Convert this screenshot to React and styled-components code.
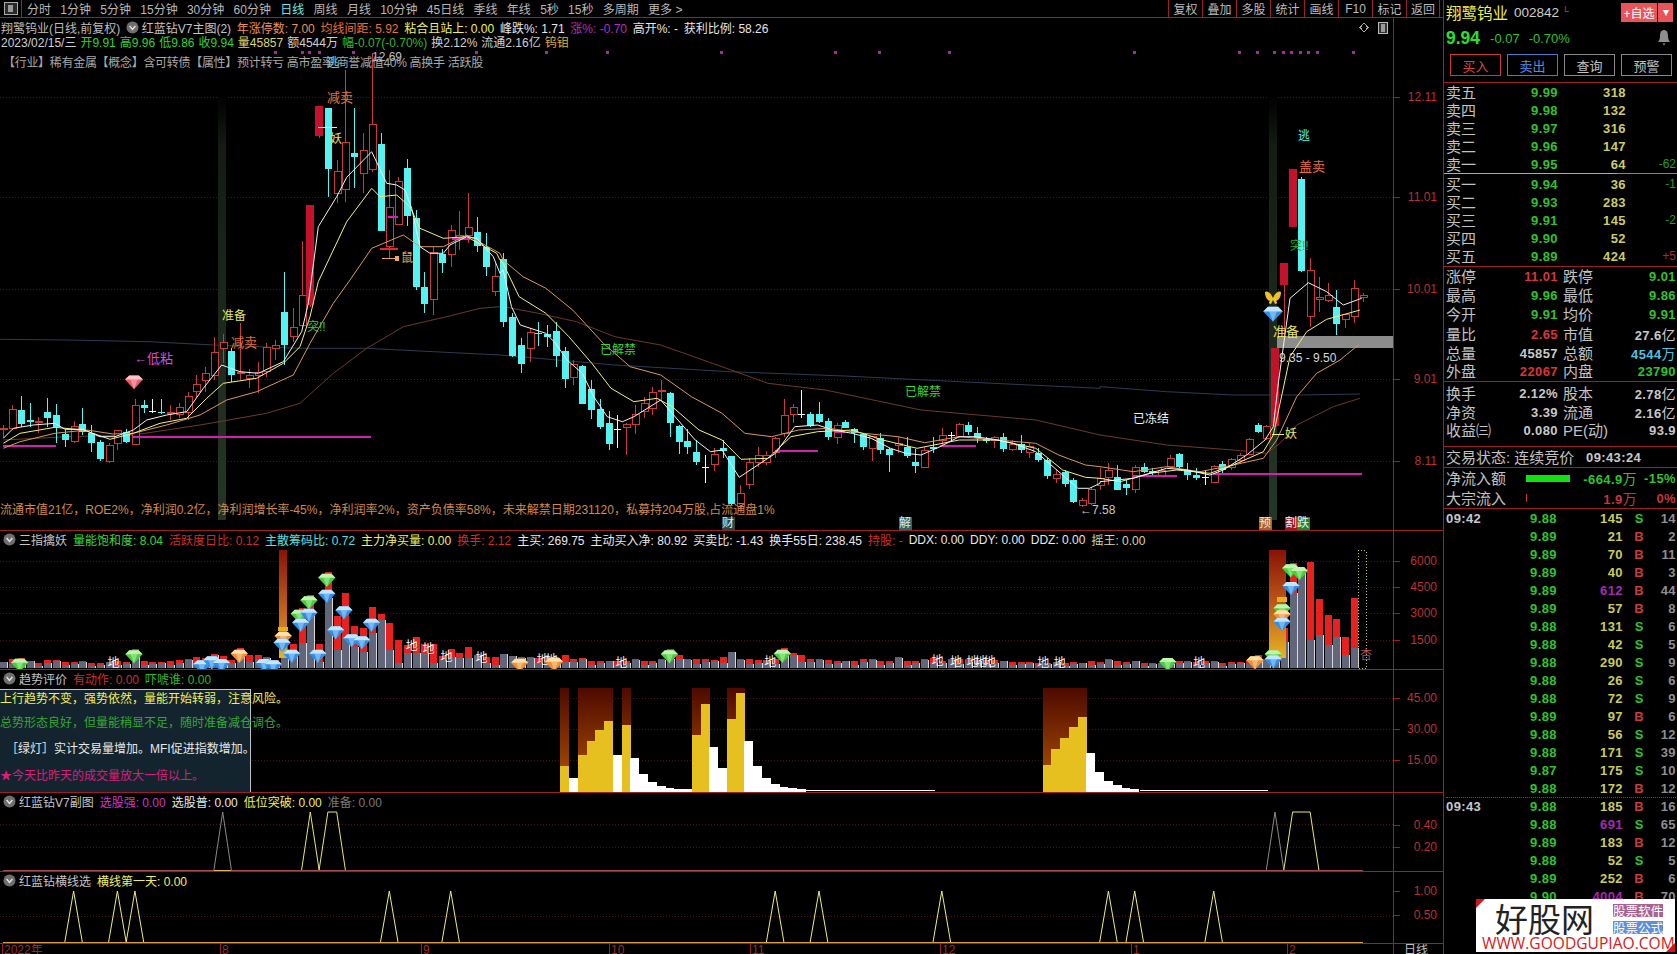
import React from "react";
import styled, { createGlobalStyle } from "styled-components";

const FONT = `"Liberation Sans","Noto Sans CJK SC",sans-serif`;
const LINE = "#9c1f28";
const GRID = "#4d1616";
const CYAN = "#55f2f2";
const RED = "#c93a3c";

const Global = createGlobalStyle`
  html, body { margin: 0; padding: 0; background: #000; overflow: hidden; }
  * { box-sizing: border-box; }
`;

const Page = styled.div`
  width: 1677px; height: 954px; display: flex; background: #000; color: #c4c4c4;
  font: 12px ${FONT}; overflow: hidden;
`;
const LeftCol = styled.div`width: 1443px; display: flex; flex-direction: column; flex: none;`;

/* toolbar */
const Toolbar = styled.div`
  height: 18px; flex: none; display: flex; align-items: stretch; border-bottom: 1px solid ${LINE}; padding-right: 3px;
`;
const ToolIcon = styled.div`
  width: 22px; display: flex; align-items: center; justify-content: center; border-right: 1px solid ${LINE}; margin-right: 5px;
`;
const Periods = styled.div`display: flex; align-items: center; gap: 9.3px; white-space: nowrap;`;
const Period = styled.span`color: ${p => (p.$on ? "#6fe6f0" : "#b8b8b8")}; font-size: 12px;`;
const Tools = styled.div`display: flex; margin-left: auto;`;
const Tool = styled.div`
  width: 34px; display: flex; align-items: center; justify-content: center; color: #bcbcbc; border-left: 1px solid ${LINE};
  &:last-child { border-right: 1px solid ${LINE}; }
`;

/* panels */
const Panel = styled.div`
  height: ${p => p.$h}px; flex: none; display: grid; grid-template-columns: 1393px 50px;
  border-bottom: ${p => (p.$last ? "0" : `1px solid ${LINE}`)};
`;
const Plot = styled.div`position: relative; overflow: hidden;`;
const Chart = styled.svg`display: block; shape-rendering: crispEdges;`;
const AxisCol = styled.div`border-left: 1px solid ${LINE}; overflow: hidden;`;
const AxisSvg = styled.svg`display: block;`;
const Smooth = styled.g`shape-rendering: geometricPrecision;`;
const Note = styled.text`
  font: ${p => p.$w || 400} ${p => p.$s || 12}px ${FONT}; fill: ${p => p.$c || "#ccc"};
  text-anchor: ${p => p.$a || "start"}; dominant-baseline: central;
`;
const Overlay = styled.div`position: absolute; left: 0; top: 0; width: 100%; pointer-events: none;`;
const HeadRow = styled.div`
  display: flex; align-items: center; white-space: nowrap; height: ${p => p.$h || 17}px; gap: ${p => p.$gap || 6}px;
  padding-left: ${p => p.$pl ?? 3}px; margin-top: ${p => p.$mt || 0}px;
`;
const Item = styled.span`color: ${p => p.$c || "#c4c4c4"}; letter-spacing: ${p => p.$ls || 0}px;`;
const Badge = styled.svg`flex: none; margin-right: -3px;`;

const Tip = styled.div`
  position: absolute; left: 0; top: 19px; width: 251px; height: 103px; background: #14242e;
  border-top: 1px solid #b6c4c8; border-right: 1px solid #b6c4c8; font-size: 12px;
`;
const TipLine = styled.div`
  position: absolute; left: ${p => p.$l || 0}px; top: ${p => p.$t}px; white-space: nowrap; color: ${p => p.$c}; line-height: 16px;
`;

/* right side */
const Right = styled.div`
  width: 234px; flex: none; border-left: 1px solid ${LINE}; position: relative; overflow: hidden;
  display: flex; flex-direction: column;
`;
const Quote = styled.div`height: 83px; flex: none; border-bottom: 1px solid ${LINE}; padding: 0 2px;`;
const NameRow = styled.div`display: flex; align-items: center; height: 24px;`;
const StockName = styled.span`color: #f2f23c; font-size: 15.5px;`;
const Code = styled.span`color: #cfcfcf; font-size: 13.5px; margin-left: 6px;`;
const Mark = styled.span`color: #c33; font-size: 9px; margin: -6px 0 0 5px;`;
const FavBox = styled.div`margin-left: auto; display: flex; gap: 1px; margin-right: 2px;`;
const Fav = styled.div`
  height: 19px; background: #e9545a; color: #fff; display: flex; align-items: center; justify-content: center;
  width: ${p => p.$w}px; font-size: 12px;
`;
const PriceRow = styled.div`display: flex; align-items: center; height: 26px; margin-top: 1px;`;
const BigPrice = styled.span`color: #2be02b; font: 700 17.5px ${FONT};`;
const Delta = styled.span`color: #2fc32f; font-size: 13px; margin-left: ${p => p.$m}px;`;
const Bell = styled.svg`margin-left: auto; margin-right: 4px;`;
const BtnRow = styled.div`display: flex; gap: 6px; margin: 3px 0 0 4px;`;
const Btn = styled.div`
  width: 51px; height: 22px; border: 1px solid ${p => p.$c}; color: ${p => p.$t}; display: flex; align-items: center; justify-content: center; font-size: 13px;
`;
const Section = styled.div`
  height: ${p => p.$h}px; flex: none; padding: ${p => p.$pt || 0}px 1px 0 2px; border-bottom: 1px solid ${LINE};
  ${p => p.$split ? "border-image: linear-gradient(90deg,#c8a85a 74%,#5f86c8 74%) 1;" : ""}
`;
const Row = styled.div`
  display: grid; height: ${p => p.$h}px; align-items: center; grid-template-columns: ${p => p.$cols};
  white-space: nowrap;
`;
const Label = styled.span`font-size: 15px; color: #c2c2c2; line-height: 1;`;
const Num = styled.span`
  font: 700 13px ${FONT}; letter-spacing: .4px; text-align: ${p => p.$left ? "left" : "right"}; color: ${p => p.$c || "#c8c8c8"};
`;
const Unit = styled.span`font-weight: 400; font-size: 14px;`;
const Small = styled.span`font-size: 12px; text-align: right; color: ${p => p.$c}; opacity: .8;`;
const FlowBar = styled.div`height: ${p => p.$hh}px; width: ${p => p.$w}px; background: ${p => p.$c};`;
const Ticks = styled.div`flex: 1; overflow: hidden; padding: 0 1px 0 2px;`;
const TickRow = styled.div`
  display: grid; height: 18px; align-items: center; grid-template-columns: 48px 63px 66px 32px 21px;
  ${p => p.$first ? "border-top: 1px dotted #555;" : ""} white-space: nowrap;
`;
const Side = styled.span`font: 700 13px ${FONT}; text-align: center; color: ${p => p.$s === "S" ? "#2fc32f" : "#c83c3c"};`;
const Count = styled.span`font: 700 13px ${FONT}; letter-spacing: .4px; text-align: right; color: #8f8f8f;`;

const Water = styled.div`
  position: absolute; right: 2px; bottom: 2px; width: 199px; height: 53px; background: #fff; overflow: hidden;
  &::before { content: ""; position: absolute; left: 0; top: 0; border-top: 9px solid #d01818; border-right: 9px solid transparent; }
  &::after { content: ""; position: absolute; right: 0; bottom: 0; border-bottom: 9px solid #d01818; border-left: 9px solid transparent; }
`;
const WaterTop = styled.div`display: flex; align-items: center; height: 36px; padding: 3px 0 0 19px;`;
const WaterName = styled.span`color: #222; font: 400 33px/33px "Noto Sans CJK SC",sans-serif;`;
const WaterTags = styled.div`display: flex; flex-direction: column; gap: 4px; margin-left: 19px;`;
const WaterTag = styled.span`
  background: ${p => p.$c}; color: #fff; font: 400 12.5px/13px "Noto Sans CJK SC",sans-serif; width: 50px; text-align: center;
`;
const WaterUrl = styled.div`color: #d42020; font: 400 15.6px/16px "Open Sans",sans-serif; padding-left: 6px; white-space: nowrap;`;

/* data */
const X = i => 3.4 + 8.77 * i;
const Y = v => 90 + v / 3;
const V = v => 520 + v / 3;
const raw = [
  [1015,1016,1005,1045],[958,1015,945,1020],[960,1002,918,1010],[990,996,940,1010],[993,997,980,1030],[966,985,925,1010],[975,1012,942,1060],[1032,1050,1020,1070],
  [1010,1055,992,1060],[1003,1028,955,1035],[1028,1058,1005,1085],[1057,1107,1050,1112],[1065,1112,1060,1120],[1022,1060,1020,1080],[1025,1055,1018,1060],[946,1063,928,1065],
  [945,955,930,970],[962,964,926,970],[965,967,928,972],[968,972,945,990],[953,975,938,985],[920,968,905,990],[883,905,855,925],[850,872,830,905],[787,855,742,870],[757,775,733,820],
  [783,855,775,875],[848,850,700,870],[857,865,838,895],[848,858,815,910],[772,845,760,860],[766,776,750,810],[666,765,545,825],[712,740,655,755],[616,705,452,710],[346,645,346,650],
  [48,137,48,145],[55,237,55,322],[243,310,210,340],[157,298,-60,335],[188,200,55,295],[182,250,130,310],[103,238,-110,245],[162,422,130,422],[352,470,240,505],[275,403,260,405],
  [235,380,208,408],[385,593,360,600],[590,640,545,668],[487,628,470,675],[492,520,478,550],[422,493,405,530],[435,440,362,480],[412,435,308,460],[427,470,382,485],[472,532,430,558],
  [560,605,520,618],[507,695,490,710],[682,800,670,800],[765,822,745,850],[727,775,715,815],[728,730,695,768],[732,742,705,770],[723,798,695,830],[783,867,770,895],[823,862,810,885],
  [828,942,825,942],[897,960,870,988],[958,1013,928,1018],[1000,1062,962,1080],[1018,1020,975,1075],[1003,1012,1000,1095],[973,1003,945,1033],[940,965,920,985],[908,957,890,975],
  [902,904,870,930],[910,1000,905,1040],[1008,1055,1005,1092],[1053,1070,1018,1092],[1087,1118,1050,1125],[1130,1132,1095,1178],[1092,1123,1075,1143],[1075,1085,1050,1105],
  [1098,1243,1098,1245],[1210,1250,1185,1255],[1117,1182,1105,1198],[1095,1117,1072,1130],[1095,1115,1083,1125],[1045,1088,1040,1105],[977,1032,928,1040],[953,973,942,998],
  [972,974,900,985],[972,1008,965,1012],[972,997,935,1000],[993,1042,985,1050],[1005,1042,1000,1063],[995,1012,990,1015],[1018,1030,1015,1060],[1033,1072,1030,1080],[1040,1075,1038,1112],
  [1045,1082,1030,1092],[1078,1097,1075,1145],[1060,1065,1040,1090],[1072,1100,1042,1105],[1115,1128,1078,1150],[1080,1130,1070,1133],[1070,1076,1040,1090],[1035,1050,1015,1065],
  [1035,1037,1025,1055],[1003,1040,1000,1045],[1005,1027,995,1035],[1030,1045,1012,1058],[1048,1054,1040,1058],[1042,1050,1038,1075],[1040,1075,1030,1085],[1062,1078,1050,1082],
  [1062,1080,1035,1088],[1068,1085,1060,1105],[1090,1110,1075,1115],[1110,1157,1105,1168],[1153,1165,1140,1180],[1147,1182,1140,1190],[1170,1235,1165,1240],[1232,1247,1225,1250],
  [1197,1240,1190,1245],[1165,1185,1135,1200],[1142,1162,1120,1185],[1160,1198,1125,1200],[1183,1196,1170,1215],[1132,1198,1125,1210],[1130,1145,1120,1150],[1143,1148,1135,1155],
  [1140,1155,1130,1160],[1105,1130,1095,1135],[1093,1133,1090,1135],[1140,1155,1118,1170],[1155,1163,1135,1170],[1160,1162,1140,1185],[1130,1177,1125,1180],[1123,1140,1112,1150],
  [1108,1133,1105,1140],[1095,1110,1090,1120],[1048,1092,1045,1095],[1005,1025,1000,1030],[1008,1045,1005,1050],[775,1008,775,1010],[520,585,520,775],[238,412,238,412],[268,545,262,545],
  [542,680,503,710],[622,628,562,665],[615,630,580,635],[650,702,600,735],[672,686,672,715],[595,680,570,700],[617,623,610,635],
];
const cyanSet = new Set([2,3,5,6,7,9,10,11,14,16,17,18,26,32,37,40,43,46,47,48,50,54,55,57,58,59,61,62,63,64,66,67,68,69,70,76,77,78,79,80,82,83,91,92,93,94,96,97,98,100,101,103,104,106,108,110,111,112,114,116,118,119,121,122,127,128,130,131,134,135,136,137,139,143,148,152]);
const solidSet = new Set([35,36,145,146,147]);
const whiteSet = new Set([17,70,80,91,108,137]);

const pts = {
  z6: (x, y) => [x / 3, Y(y)],
  z9: (x, y) => [500 + x / 2.613, Y(y)],
  z7: (x, y) => [1100 + x / 3, Y(y)],
};
const build = segs => segs.flatMap(([k, arr]) => {
  const out = [];
  for (let n = 0; n < arr.length; n += 2) out.push(pts[k](arr[n], arr[n + 1]).map(v => v.toFixed(1)).join(","));
  return out;
}).join(" ");

const MAS = [
  { c: "#2e3a55", s: [["z6",[0,748,200,750,450,755,640,765,900,775,1100,775,1300,785,1500,795]],["z9",[0,795,300,825,600,845,900,858,1200,875,1568,895]],["z7",[0,890,200,905,400,915,600,915,780,912]]] },
  { c: "#6b3a2c", s: [["z6",[10,1050,200,1040,400,1035,600,1005,800,970,900,940,1000,850,1100,775,1210,710,1340,680,1440,655,1500,650]],["z9",[8,650,100,670,200,695,300,740,420,765,580,830,700,880,850,900,1100,960,1400,990,1568,1035]],["z7",[0,1035,200,1065,400,1080,500,1090,540,1060,590,1005,700,950,780,925]]] },
  { c: "#d8985c", s: [["z6",[10,1075,60,1055,165,1030,260,1020,340,1032,400,1030,500,1005,600,975,680,930,770,905,880,855,930,760,1000,640,1050,570,1115,475,1210,435,1260,470,1330,470,1400,435,1500,490]],["z9",[8,510,60,560,120,595,190,660,270,760,340,830,420,855,500,920,580,970,640,1030,710,1040,780,1020,860,1015,950,1030,1040,1040,1110,1058,1200,1040,1300,1050,1400,1060,1460,1095,1530,1125,1568,1130]],["z7",[0,1130,100,1145,200,1130,300,1145,400,1125,490,1105,530,1050,590,920,650,850,720,810,775,765]]] },
  { c: "#f2f27a", s: [["z6",[10,1060,60,1030,165,1012,250,1020,330,1048,400,1030,480,1000,560,985,620,925,670,880,770,865,850,820,900,770,930,680,955,575,1040,395,1115,295,1140,320,1190,315,1230,350,1260,415,1330,445,1400,440,1490,490,1500,510]],["z9",[8,520,50,620,120,670,180,740,240,820,290,895,350,935,410,925,450,950,520,1020,580,1050,630,1108,700,1105,760,1040,830,1025,920,1020,1000,1050,1090,1075,1200,1050,1300,1050,1400,1075,1470,1140,1530,1162,1568,1165]],["z7",[0,1165,60,1175,150,1150,230,1140,330,1150,400,1125,490,1085,520,1035,570,800,620,725,680,688,780,660]]] },
  { c: "#f4f4f4", s: [["z6",[10,1045,40,1015,100,1005,165,1000,195,1018,250,1018,300,1040,345,1040,400,1020,440,990,500,975,560,965,610,895,665,825,720,845,775,850,850,815,905,725,925,640,955,410,1010,320,1040,262,1115,185,1160,280,1190,285,1215,300,1235,355,1260,470,1290,490,1330,490,1350,465,1400,440,1430,445,1480,500,1500,550]],["z9",[8,540,30,650,53,705,120,730,145,760,175,810,215,850,245,920,280,980,320,995,350,980,420,930,450,970,510,1050,550,1085,580,1080,625,1162,720,1090,770,1010,830,1005,870,1020,920,1030,970,1045,1020,1075,1060,1090,1100,1095,1150,1070,1200,1040,1240,1040,1290,1048,1340,1060,1400,1085,1470,1155,1510,1195,1540,1195,1568,1180]],["z7",[0,1175,50,1170,100,1165,150,1150,200,1135,260,1140,330,1155,370,1140,440,1095,495,1050,520,1010,535,880,570,625,625,578,680,605,730,645,785,625]]] },
];

const Candle = ({ i, r }) => {
  const [t, b, h, l] = r;
  const x = Math.round(X(i));
  const top = Y(t), bot = Y(b), hi = Y(h), lo = Y(l);
  const bh = Math.max(1, Math.round(bot - top));
  if (solidSet.has(i)) {
    return (<g>
      <rect x={x} y={hi} width="1" height={lo - hi} fill={RED} />
      <rect x={x - 4} y={top} width="8" height={bot - top} fill="#c4122c" />
    </g>);
  }
  if (cyanSet.has(i)) {
    const c = whiteSet.has(i) ? "#e8ffff" : CYAN;
    return (<g>
      <rect x={x} y={hi} width="1" height={lo - hi} fill={c} />
      <rect x={x - 3} y={top} width="7" height={bh} fill={c} />
    </g>);
  }
  return (<g>
    <rect x={x} y={hi} width="1" height={lo - hi} fill={RED} />
    <rect x={x - 3} y={top} width="7" height={bh} fill="#000" stroke={RED} strokeWidth="1" />
  </g>);
};

const Gem = ({ x, y, c, l, s = 1.15 }) => (
  <g transform={`translate(${x} ${y}) scale(${s})`}>
    <path d="M-7.5 -2 L-4 -5.5 H4 L7.5 -2 L0 6 Z" fill={c} />
    <path d="M-7.5 -2 L-4 -5.5 H4 L7.5 -2 Z" fill={l} />
    <path d="M-3 -2 L0 6 L3 -2 Z" fill="#fff" opacity=".35" />
  </g>
);
const GREEN = ["#46cf36", "#bff3ae"];
const BLUE = ["#2f90e8", "#c3e6ff"];
const ORANGE = ["#ee9030", "#ffe1a8"];
const PINK = ["#ee5a66", "#ffc4c4"];

const z4 = (x, y) => [x / 2.8, V(y)];
const z11 = (x, y) => [540 + x / 2.063, 620 + y / 3];
const z8 = (x, y) => [1100 + x / 3, V(y)];
const gems = [
  [z4(55,435),GREEN],[z4(375,410),GREEN],[z4(915,180),GREEN],[z4(865,248),GREEN],[z4(838,288),GREEN],
  [z4(565,440),BLUE],[z4(593,428),BLUE],[z4(620,436),BLUE],[z4(740,436),BLUE],[z4(765,440),BLUE],[z4(793,355),ORANGE],[z4(790,375),BLUE],[z4(817,408),BLUE],[z4(890,408),BLUE],[z4(915,228),BLUE],[z4(963,278),BLUE],[z4(940,338),BLUE],[z4(985,362),BLUE],[z4(1013,368),BLUE],[z4(1040,315),BLUE],[z4(842,315),BLUE],[z4(865,285),BLUE],
  [z4(670,408),ORANGE],[z4(1455,435),ORANGE],[z4(1550,432),ORANGE],
  [z11(267,110),GREEN],[z11(500,108),GREEN],[z11(1295,133),GREEN],[z11(30,132),ORANGE],[z11(1475,128),ORANGE],
  [z8(572,152),GREEN],[z8(598,160),GREEN],[z8(573,205),BLUE],[z8(546,272),GREEN],[z8(546,290),ORANGE],[z8(546,312),BLUE],[z8(520,410),GREEN],[z8(520,425),BLUE],
];
const earth = [
  z4(318,430),z4(1153,378),z4(1200,388),z4(1250,410),z4(1348,415),z4(1520,420),z4(1545,420),
  z11(168,128),z11(475,125),z11(820,122),z11(858,125),z11(892,125),z11(910,125),z11(928,125),z11(1038,128),z11(1072,128),z11(1360,128),
];

const volTop = [425,418,415,422,430,420,420,427,425,423,430,430,425,422,425,388,422,427,427,423,420,417,410,415,402,408,420,385,406,405,410,420,340,372,265,225,372,155,288,218,318,323,262,282,308,360,375,352,372,372,408,387,398,380,405,410,410,402,408,410,410,415,412,420,
  405,418,413,422,422,422,422,422,418,422,422,418,388,405,418,418,418,420,410,396,417,418,420,420,417,385,400,405,417,418,420,422,422,422,418,418,422,422,412,422,422,418,415,422,418,418,418,420,420,420,422,425,427,427,428,428,425,428,425,428,423,427,418,422,427,422,428,428,428,418,423,423,425,422,424,428,427,427,420,405,418,
  390,325,130,140,127,238,285,297,352,234,440];
const grayTop = { 32:400,33:405,34:370,35:280,36:425,37:235,38:390,39:350,40:380,41:395,42:340,43:300,44:390,45:430,46:400,47:400,48:400,49:430,51:410,52:415,53:415,56:435,57:402,58:408,59:415,83:396,82:428,
  146:365,147:220,148:155,149:360,150:345,151:375,152:350,153:405,154:385,155:445,145:405 };

const Vol = ({ i, t }) => {
  const x = Math.round(X(i)) - 3;
  const base = V(445);
  const g = grayTop[i] ?? (t + (445 - t) * (i % 3 === 0 ? 0.1 : i % 3 === 1 ? 0.5 : 0.3));
  if (i === 155) return null;
  return (<g>
    <rect x={x} y={V(t)} width="7" height={base - V(t)} fill="#e8201e" />
    <rect x={x} y={V(g)} width="7" height={base - V(g)} fill="#62667a" />
    <rect x={x + 7} y={V(g)} width="1" height={base - V(g)} fill="#d8d8d8" />
  </g>);
};

const goldBars = { 64:258,66:225,67:183,68:150,69:123,71:135,79:165,80:72,83:117,84:38,119:255,120:207,121:174,122:140,123:110 };
const whiteBars = { 65:295,70:225,72:234,73:282,74:306,75:318,76:324,77:327,78:328,81:201,82:264,85:183,86:258,87:294,88:312,89:321,90:324,91:328,124:218,125:275,126:303,127:315,128:323,129:327 };
const T3 = v => 680 + v / 3;

const Grid = ({ ys }) => ys.map(y => (
  <line key={y} x1="0" x2="1393" y1={y + .5} y2={y + .5} stroke={GRID} strokeDasharray="1 2" />
));

const AxisLabels = ({ top, h, items }) => (
  <AxisSvg width="49" height={h} viewBox={`1394 ${top} 49 ${h}`}>
    {items.map(([y, t]) => (
      <g key={t}>
        <rect x="1394" y={y} width="6" height="1" fill={LINE} />
        <Note x="1437" y={y} $a="end" $c="#bb3036">{t}</Note>
      </g>
    ))}
  </AxisSvg>
);

const Chev = () => (
  <Badge width="13" height="13" viewBox="0 0 13 13">
    <circle cx="6.5" cy="6.5" r="6" fill="#6f6f6f" />
    <path d="M3.6 5 L6.5 8.4 L9.4 5" fill="none" stroke="#e4e4e4" strokeWidth="1.4" />
  </Badge>
);

const PERIODS = ["分时","1分钟","5分钟","15分钟","30分钟","60分钟","日线","周线","月线","10分钟","45日线","季线","年线","5秒","15秒","多周期","更多 >"];
const TOOLS = ["复权","叠加","多股","统计","画线","F10","标记","返回"];
const dots = [274,300.5,308,317.5,352.4,475,545,606,720,834,878,948,1132.5,1238,1256,1273,1282,1290,1299,1307,1316,1352];
const MAGENTA = [[3,56,445],[133,371,436],[775,818,450],[940,976,445],[1133,1177,475],[1213,1362,473]];

const MainPanel = () => (
  <Panel $h={513}>
    <Plot>
      <Chart width="1393" height="512" viewBox="0 18 1393 512">
        <defs>
          <linearGradient id="col" x1="0" x2="0" y1="0" y2="1">
            <stop offset="0" stopColor="#000" /><stop offset=".12" stopColor="#141c14" /><stop offset="1" stopColor="#263626" />
          </linearGradient>
        </defs>
        <Grid ys={[97,197,289,379,461]} />
        <rect x="218" y="95" width="8" height="425" fill="url(#col)" />
        <rect x="1269" y="95" width="8" height="425" fill="url(#col)" />
        {dots.map(x => <rect key={x} x={x} y="51" width="3" height="3" fill="#a52aa0" />)}
        <Smooth>{MAS.slice(0, 2).map(m => <polyline key={m.c} points={build(m.s)} fill="none" stroke={m.c} strokeWidth="1" />)}</Smooth>
        {raw.map((r, i) => <Candle key={i} i={i} r={r} />)}
        <rect x="1277" y="336" width="116" height="12" fill="#8c8c8c" />
        {MAGENTA.map(([a, b, y]) => (
          <rect key={a} x={a} y={y} width={b - a} height="2" fill="#d51fb4" />
        ))}
        <rect x="388" y="216" width="10" height="2" fill="#d51fb4" />
        <rect x="452" y="238" width="18" height="2" fill="#d51fb4" />
        <rect x="835" y="431" width="10" height="2" fill="#d51fb4" />
        <rect x="380" y="248" width="18" height="2" fill="#e02828" />
        <Smooth>{MAS.slice(2).map(m => <polyline key={m.c} points={build(m.s)} fill="none" stroke={m.c} strokeWidth="1" />)}</Smooth>
        <line x1="318" x2="337" y1="127.5" y2="127.5" stroke="#e8e8d0" />
        <Note x="330" y="139" $c="#e6e66a">妖</Note>
        <Note x="327" y="63" $s={12} $c={CYAN}>逃</Note>
        <Note x="372" y="57" $c="#bdbdbd">12.69</Note>
        <Note x="327" y="97" $s={13} $c="#e8703c">减卖</Note>
        <line x1="382" x2="394" y1="258.5" y2="258.5" stroke="#eba85c" />
        <circle cx="397" cy="258.5" r="2.5" fill="#eba85c" />
        <Note x="401" y="258" $c="#eba85c">鼠</Note>
        <Note x="222" y="316" $s={12} $c="#e8e85c">准备</Note>
        <Note x="231" y="342" $s={13} $c="#e8703c">减卖</Note>
        <Note x="307" y="327" $s={12} $c="#39c63a">突!!</Note>
        <Note x="134" y="358" $s={13} $c="#d24ed2">←低粘</Note>
        <Note x="600" y="350" $c="#39d63a">已解禁</Note>
        <Note x="905" y="392" $c="#39d63a">已解禁</Note>
        <Note x="1133" y="419" $c="#f0f0f0">已冻结</Note>
        <Note x="1298" y="136" $c={CYAN}>逃</Note>
        <Note x="1299" y="166" $s={13} $c="#e8703c">盖卖</Note>
        <Note x="1290" y="246" $c="#2fa82f">突!!</Note>
        <Note x="1273" y="331" $s={13} $c="#e8e85c">准备</Note>
        <Note x="1279" y="358" $c="#d8d8d8">9.35 - 9.50</Note>
        <line x1="1272" x2="1284" y1="434.5" y2="434.5" stroke="#e8e870" />
        <Note x="1285" y="434" $c="#e8e870">妖</Note>
        <Note x="1080" y="510" $c="#c8c8c8">←7.58</Note>
        <Smooth>
          <Gem x={134} y={382} c={PINK[0]} l={PINK[1]} s={1.2} />
          <Gem x={1273} y={314} c={BLUE[0]} l={BLUE[1]} s={1.3} />
          <path d="M1273 298 C1270 291 1266 291 1265 292 C1265 297 1267 300 1270 301 C1268 303 1269 304 1271 304 L1273 300 L1275 304 C1277 304 1278 303 1276 301 C1279 300 1281 297 1281 292 C1280 291 1276 291 1273 298 Z" fill="#ecc22c" />
        </Smooth>
        <Note x="0" y="510" $c="#d08a4a">流通市值21亿，ROE2%，净利润0.2亿，净利润增长率-45%，净利润率2%，资产负债率58%，未来解禁日期231120，私募持204万股,占流通盘1%</Note>
        <rect x="722" y="517" width="13" height="13" fill="#1f4a4a" /><Note x="722" y="523" $c="#e6e6e6">财</Note>
        <rect x="899" y="517" width="13" height="13" fill="#1f6a6a" /><Note x="899" y="523" $c="#e6e6e6">解</Note>
        <rect x="1259" y="517" width="13" height="13" fill="#a8622c" /><Note x="1259" y="523" $c="#f0e8d0">预</Note>
        <rect x="1285" y="517" width="12" height="13" fill="#a01414" /><rect x="1297" y="517" width="13" height="13" fill="#178a2c" />
        <Note x="1285" y="523" $c="#f0f0f0">割跌</Note>
        <path d="M1364 23 L1368 27.5 L1364 32 L1360 27.5 Z" fill="none" stroke="#aaa" />
        <rect x="1378.5" y="22.5" width="9" height="11" fill="#333" stroke="#bbb" />
        <rect x="1381" y="24" width="4" height="8" fill="#999" />
      </Chart>
      <Overlay>
        <HeadRow $h={14} $mt={2} $gap={5.7} $pl={1}>
          <Item $c="#bdbdbd">翔鹭钨业(日线,前复权)</Item><Chev /><Item>红蓝钻V7主图(2)</Item>
          <Item $c="#e8935a">年涨停数: 7.00</Item><Item $c="#e8703c">均线间距: 5.92</Item>
          <Item $c="#f0f05a">粘合且站上: 0.00</Item><Item $c="#e6e6e6">峰跌%: 1.71</Item>
          <Item $c="#b32fc0">涨%: -0.70</Item><Item $c="#e6e6e6">高开%: -</Item><Item $c="#e6e6e6">获利比例: 58.26</Item>
        </HeadRow>
        <HeadRow $h={14} $gap={4} $pl={1}>
          <Item $c="#cfcfcf">2023/02/15/三</Item><Item $c="#2fd42f">开9.91</Item><Item $c="#2fd42f">高9.96</Item><Item $c="#2fd42f">低9.86</Item><Item $c="#2fd42f">收9.94</Item>
          <Item $c="#d8d86a">量45857</Item><Item $c="#cfcfcf">额4544万</Item><Item $c="#2fb82f">幅-0.07(-0.70%)</Item><Item $c="#cfcfcf">换2.12%</Item><Item $c="#cfcfcf">流通2.16亿</Item><Item $c="#e0b030">钨钼</Item>
        </HeadRow>
        <HeadRow $h={14} $mt={6} $gap={0}>
          <Item $c="#a8a8a8" $ls={-0.3}>【行业】稀有金属【概念】含可转债【属性】预计转亏 高市盈率 商誉减值40% 高换手 活跃股</Item>
        </HeadRow>
      </Overlay>
    </Plot>
    <AxisCol><AxisLabels top={18} h={512} items={[[97,"12.11"],[197,"11.01"],[289,"10.01"],[379,"9.01"],[461,"8.11"]]} /></AxisCol>
  </Panel>
);

const VolPanel = () => (
  <Panel $h={139}>
    <Plot>
      <Chart width="1393" height="138" viewBox="0 531 1393 138">
        <defs>
          <linearGradient id="fire" x1="0" x2="0" y1="0" y2="1">
            <stop offset="0" stopColor="#8a1206" /><stop offset=".55" stopColor="#c4601a" /><stop offset="1" stopColor="#e6b422" />
          </linearGradient>
        </defs>
        <Grid ys={[561,587,613,640]} />
        {volTop.map((t, i) => <Vol key={i} i={i} t={t} />)}
        <rect x="279" y="550" width="8" height="108" fill="url(#fire)" />
        <rect x="1269" y="550" width="17" height="108" fill="url(#fire)" />
        <rect x="1358" y="550.5" width="8" height="118" fill="none" stroke="#c8c860" strokeDasharray="1 2" />
        {earth.map(([x, y], n) => <Note key={n} x={x - 6} y={y} $c="#f4f4f4">地</Note>)}
        <Smooth>{gems.map(([[x, y], [c, l]], n) => <Gem key={n} x={x} y={y} c={c} l={l} />)}</Smooth>
        <rect x="278" y="627" width="10" height="4" fill="#e8b020" />
        <rect x="1277" y="597" width="10" height="5" fill="#e8b020" />
        <Note x="1360" y="655" $c="#b05060">杏</Note>
      </Chart>
      <Overlay>
        <HeadRow $h={17} $gap={6}>
          <Chev /><Item>三指擒妖</Item><Item $c="#39d63a">量能饱和度: 8.04</Item><Item $c="#d02c2c">活跃度日比: 0.12</Item>
          <Item $c="#55e0e0">主散筹码比: 0.72</Item><Item $c="#f0f05a">主力净买量: 0.00</Item><Item $c="#d02c2c">换手: 2.12</Item>
          <Item $c="#e8e8e8">主买: 269.75</Item><Item $c="#e8e8e8">主动买入净: 80.92</Item><Item $c="#e8e8e8">买卖比: -1.43</Item>
          <Item $c="#e8e8e8">换手55日: 238.45</Item><Item $c="#d02c2c">持股: -</Item><Item $c="#e8e8e8">DDX: 0.00</Item><Item $c="#e8e8e8">DDY: 0.00</Item>
          <Item $c="#e8e8e8">DDZ: 0.00</Item><Item $c="#d8d8a0">摇王: 0.00</Item>
        </HeadRow>
      </Overlay>
    </Plot>
    <AxisCol><AxisLabels top={531} h={138} items={[[561,"6000"],[587,"4500"],[613,"3000"],[640,"1500"]]} /></AxisCol>
  </Panel>
);

const TrendPanel = () => (
  <Panel $h={123}>
    <Plot>
      <Chart width="1393" height="122" viewBox="0 670 1393 122">
        <defs>
          <linearGradient id="burn" gradientUnits="userSpaceOnUse" x1="0" x2="0" y1="688" y2="775">
            <stop offset="0" stopColor="#4e0a00" /><stop offset="1" stopColor="#a44a00" />
          </linearGradient>
        </defs>
        <Grid ys={[698,729,760]} />
        {Object.entries(goldBars).map(([i, t]) => (
          <g key={i}>
            <rect x={X(+i) - 4.4} y={T3(25)} width="8.9" height={T3(t) - T3(25)} fill="url(#burn)" />
            <rect x={X(+i) - 4.4} y={T3(t)} width="8.9" height={T3(335) - T3(t)} fill="#e6c01e" />
          </g>
        ))}
        {Object.entries(whiteBars).map(([i, t]) => (
          <rect key={i} x={X(+i) - 4.4} y={T3(t)} width="8.9" height={T3(335) - T3(t)} fill="#fff" />
        ))}
        <rect x={X(92) - 4} y="790" width={939 - X(92)} height="1" fill="#fff" />
        <rect x={X(130) - 4} y="790" width={1272 - X(130)} height="1" fill="#fff" />
      </Chart>
      <Overlay>
        <HeadRow $h={17} $gap={6}>
          <Chev /><Item>趋势评价</Item><Item $c="#d02c2c">有动作: 0.00</Item><Item $c="#2fb82f">吓唬谁: 0.00</Item>
        </HeadRow>
      </Overlay>
      <Tip>
        <TipLine $t={1} $c="#f0f05a">上行趋势不变，强势依然，量能开始转弱，注意风险。</TipLine>
        <TipLine $t={25} $c="#35a735">总势形态良好，但量能稍显不足，随时准备减仓调仓。</TipLine>
        <TipLine $t={51} $l={6} $c="#e8e8e8">［绿灯］实计交易量增加。MFI促进指数增加。</TipLine>
        <TipLine $t={78} $c="#d91e7a">★今天比昨天的成交量放大一倍以上。</TipLine>
      </Tip>
    </Plot>
    <AxisCol><AxisLabels top={670} h={122} items={[[698,"45.00"],[729,"30.00"],[760,"15.00"]]} /></AxisCol>
  </Panel>
);

const tent = (c, base, top) => [`${X(c - 1).toFixed(1)},${base}`, `${X(c).toFixed(1)},${top}`, `${X(c + 1).toFixed(1)},${base}`].join(" ");
const flat = (a, b, base, top) => `${X(a - 1).toFixed(1)},${base} ${X(a).toFixed(1)},${top} ${X(b).toFixed(1)},${top} ${X(b + 1).toFixed(1)},${base}`;

const SignalPanel = () => (
  <Panel $h={79}>
    <Plot>
      <Chart width="1393" height="78" viewBox="0 793 1393 78">
        <Grid ys={[824,847]} />
        <Smooth>
          <polyline points={tent(25, 870, 812)} fill="none" stroke="#8a8a8a" />
          <polyline points={tent(145, 870, 812)} fill="none" stroke="#8a8a8a" />
          <polyline points={tent(35, 870, 812)} fill="none" stroke="#e8e870" />
          <polyline points={flat(37, 38, 870, 812)} fill="none" stroke="#e8e870" />
          <polyline points={flat(147, 149, 870, 812)} fill="none" stroke="#e8e870" />
        </Smooth>
        <rect x="3" y="870" width="1360" height="1" fill="#a8484f" />
        <rect x={X(24)} y="870" width="17" height="1" fill="#e8b050" />
      </Chart>
      <Overlay>
        <HeadRow $h={17} $gap={6}>
          <Chev /><Item>红蓝钻V7副图</Item><Item $c="#c83ac8">选股强: 0.00</Item><Item $c="#e8e8e8">选股普: 0.00</Item>
          <Item $c="#f0f05a">低位突破: 0.00</Item><Item $c="#7a7a7a">准备: 0.00</Item>
        </HeadRow>
      </Overlay>
    </Plot>
    <AxisCol><AxisLabels top={793} h={78} items={[[825,"0.40"],[847,"0.20"]]} /></AxisCol>
  </Panel>
);

const FirstDayPanel = () => (
  <Panel $h={72}>
    <Plot>
      <Chart width="1393" height="71" viewBox="0 872 1393 71">
        <Grid ys={[916]} />
        <Smooth>
          {[8,13,15,44,51,88,93,107,126,129,138].map(c => (
            <polyline key={c} points={tent(c, 942, 891)} fill="none" stroke="#eeee80" />
          ))}
        </Smooth>
        <rect x="3" y="942" width="1360" height="1" fill="#dc9d3e" />
      </Chart>
      <Overlay>
        <HeadRow $h={17} $gap={6}>
          <Chev /><Item>红蓝钻横线选</Item><Item $c="#f0f05a">横线第一天: 0.00</Item>
        </HeadRow>
      </Overlay>
    </Plot>
    <AxisCol><AxisLabels top={872} h={71} items={[[891,"1.00"],[915,"0.50"]]} /></AxisCol>
  </Panel>
);

const TimeAxis = () => (
  <Panel $h={10} $last>
    <Plot>
      <Chart width="1393" height="10" viewBox="0 944 1393 10">
        {[[4,"2022年"],[222,"8"],[423,"9"],[611,"10"],[752,"11"],[942,"12"],[1133,"1"],[1289,"2"]].map(([x, t]) => (
          <g key={t}>
            <rect x={x - 2} y="944" width="1" height="10" fill={LINE} />
            <Note x={x} y="950" $c="#a02c30">{t}</Note>
          </g>
        ))}
      </Chart>
    </Plot>
    <AxisCol>
      <AxisSvg width="49" height="10" viewBox="1394 944 49 10">
        <Note x="1404" y="950" $c="#c0c0c0">日线</Note>
      </AxisSvg>
    </AxisCol>
  </Panel>
);

const ASKS = [["卖五","9.99","318",""],["卖四","9.98","132",""],["卖三","9.97","316",""],["卖二","9.96","147",""],["卖一","9.95","64","-62"]];
const BIDS = [["买一","9.94","36","-1"],["买二","9.93","283",""],["买三","9.91","145","-2"],["买四","9.90","52",""],["买五","9.89","424","+5"]];
const BOOK = "60px 52px 68px 50px";
const STATS = "60px 52px 5px 42px 71px";

const GREENTXT = "#2fc32f";
const stats1 = [
  ["涨停",<Num $c="#d8343c">11.01</Num>,"跌停",<Num $c={GREENTXT}>9.01</Num>],
  ["最高",<Num $c={GREENTXT}>9.96</Num>,"最低",<Num $c={GREENTXT}>9.86</Num>],
  ["今开",<Num $c={GREENTXT}>9.91</Num>,"均价",<Num $c={GREENTXT}>9.91</Num>],
  ["量比",<Num $c="#d8343c">2.65</Num>,"市值",<Num>27.6<Unit>亿</Unit></Num>],
  ["总量",<Num>45857</Num>,"总额",<Num $c="#4fc0e0">4544<Unit>万</Unit></Num>],
  ["外盘",<Num $c="#d8343c">22067</Num>,"内盘",<Num $c={GREENTXT}>23790</Num>],
];
const stats2 = [
  ["换手",<Num>2.12%</Num>,"股本",<Num>2.78<Unit>亿</Unit></Num>],
  ["净资",<Num>3.39</Num>,"流通",<Num>2.16<Unit>亿</Unit></Num>],
  ["收益㈢",<Num>0.080</Num>,"PE(动)",<Num>93.9</Num>],
];

const TICKS = [
  ["09:42","9.88","145","S","14"],["","9.89","21","B","2"],["","9.89","70","B","11"],["","9.89","40","B","3"],["","9.89","612","B","44"],["","9.89","57","B","8"],
  ["","9.88","131","S","6"],["","9.88","42","S","5"],["","9.88","290","S","9"],["","9.88","26","S","6"],["","9.88","72","S","9"],["","9.89","97","B","6"],
  ["","9.88","56","S","12"],["","9.88","171","S","39"],["","9.87","175","S","10"],["","9.88","172","B","12"],
  ["09:43","9.88","185","B","16"],["","9.88","691","S","65"],["","9.89","183","B","12"],["","9.88","52","S","5"],["","9.89","252","B","6"],["","9.90","4004","B","70"],
];

const RightPanel = () => (
  <Right>
    <Quote>
      <NameRow>
        <StockName>翔鹭钨业</StockName><Code>002842</Code><Mark>L</Mark>
        <FavBox><Fav $w={36}>+自选</Fav><Fav $w={15}>▾</Fav></FavBox>
      </NameRow>
      <PriceRow>
        <BigPrice>9.94</BigPrice><Delta $m={10}>-0.07</Delta><Delta $m={9}>-0.70%</Delta>
        <Bell width="14" height="18" viewBox="0 0 14 18"><path d="M7 1 C4 1 3 4 3 7 C3 10 2 12 1 13 H13 C12 12 11 10 11 7 C11 4 10 1 7 1 Z M5.5 14.5 H8.5 L7 16.5 Z" fill="#8e8e8e" /></Bell>
      </PriceRow>
      <BtnRow>
        <Btn $c="#c93a3c" $t="#d24a4a">买入</Btn><Btn $c="#4a79c8" $t="#5a8ce0">卖出</Btn>
        <Btn $c="#888" $t="#c0c0c0">查询</Btn><Btn $c="#888" $t="#c0c0c0">预警</Btn>
      </BtnRow>
    </Quote>
    <Section $h={91} $split>
      {ASKS.map(r => (
        <Row key={r[0]} $h={18} $cols={BOOK}>
          <Label>{r[0]}</Label><Num $c={GREENTXT}>{r[1]}</Num><Num $c="#cccc66">{r[2]}</Num><Small $c="#2fc32f">{r[3]}</Small>
        </Row>
      ))}
    </Section>
    <Section $h={93} $pt={1}>
      {BIDS.map(r => (
        <Row key={r[0]} $h={18} $cols={BOOK}>
          <Label>{r[0]}</Label><Num $c={GREENTXT}>{r[1]}</Num><Num $c="#cccc66">{r[2]}</Num>
          <Small $c={r[3][0] === "+" ? "#d8343c" : "#2fc32f"}>{r[3]}</Small>
        </Row>
      ))}
    </Section>
    <Section $h={115}>
      {stats1.map(r => (
        <Row key={r[0]} $h={19} $cols={STATS}>
          <Label>{r[0]}</Label>{r[1]}<span /><Label>{r[2]}</Label>{r[3]}
        </Row>
      ))}
    </Section>
    <Section $h={65} $pt={1}>
      {stats2.map(r => (
        <Row key={r[0]} $h={19} $cols={STATS}>
          <Label>{r[0]}</Label>{r[1]}<span /><Label>{r[2]}</Label>{r[3]}
        </Row>
      ))}
    </Section>
    <Section $h={21}>
      <Row $h={20} $cols="140px 1fr">
        <Label>交易状态: 连续竞价</Label><Num $left>09:43:24</Num>
      </Row>
    </Section>
    <Section $h={41}>
      <Row $h={20} $cols="80px 54px 57px 39px">
        <Label>净流入额</Label><FlowBar $w={44} $hh={7} $c="#12e012" />
        <Num $c={GREENTXT}>-664.9<Unit>万</Unit></Num><Num $c={GREENTXT}>-15%</Num>
      </Row>
      <Row $h={20} $cols="80px 54px 57px 39px">
        <Label>大宗流入</Label><FlowBar $w={1} $hh={8} $c="#c33" />
        <Num $c="#c8343c">1.9<Unit>万</Unit></Num><Num $c="#c8343c">0%</Num>
      </Row>
    </Section>
    <Ticks>
      {TICKS.map((r, i) => (
        <TickRow key={i} $first={i === 16}>
          <Num $left>{r[0]}</Num>
          <Num $c={GREENTXT}>{r[1]}</Num>
          <Num $c={+r[2] > 500 ? "#a52ab0" : "#cccc55"}>{r[2]}</Num>
          <Side $s={r[3]}>{r[3]}</Side>
          <Count>{r[4]}</Count>
        </TickRow>
      ))}
    </Ticks>
    <Water>
      <WaterTop>
        <WaterName>好股网</WaterName>
        <WaterTags><WaterTag $c="#a8648e">股票软件</WaterTag><WaterTag $c="#5f8fd8">股票公式</WaterTag></WaterTags>
      </WaterTop>
      <WaterUrl>WWW.GOODGUPIAO.COM</WaterUrl>
    </Water>
  </Right>
);

export default function App() {
  return (
    <Page>
      <Global />
      <LeftCol>
        <Toolbar>
          <ToolIcon>
            <svg width="14" height="13" viewBox="0 0 14 13"><rect x=".5" y=".5" width="13" height="12" fill="#2a2a2a" stroke="#aaa" /><rect x="4" y="3" width="5" height="7" fill="#999" /></svg>
          </ToolIcon>
          <Periods>{PERIODS.map(p => <Period key={p} $on={p === "日线"}>{p}</Period>)}</Periods>
          <Tools>{TOOLS.map(t => <Tool key={t}>{t}</Tool>)}</Tools>
        </Toolbar>
        <MainPanel />
        <VolPanel />
        <TrendPanel />
        <SignalPanel />
        <FirstDayPanel />
        <TimeAxis />
      </LeftCol>
      <RightPanel />
    </Page>
  );
}
